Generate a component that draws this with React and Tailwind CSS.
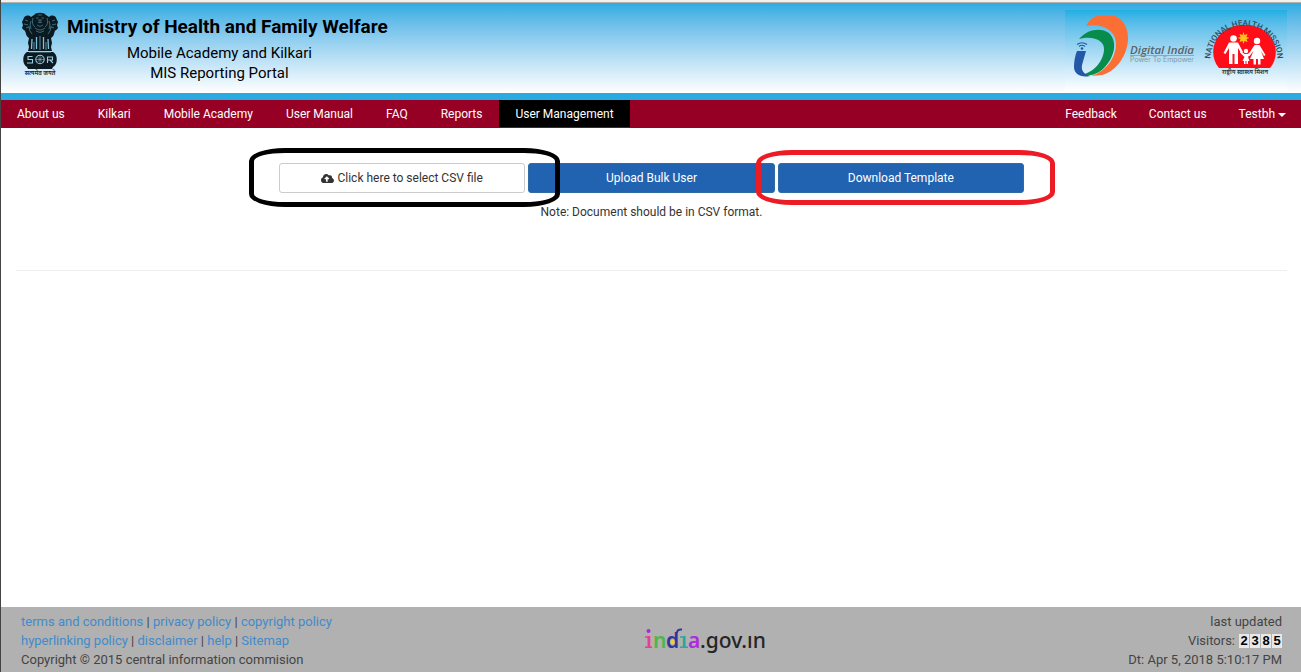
import { FaCloudUploadAlt } from "react-icons/fa";

const MAIN_LINKS = ["About us", "Kilkari", "Mobile Academy", "User Manual", "FAQ", "Reports", "User Management"];
const SIDE_LINKS = ["Feedback", "Contact us"];
const VISITORS = ["2", "3", "8", "5"];

function Emblem() {
  return (
    <svg viewBox="0 0 38 66" className="h-[66px] w-[38px] shrink-0" role="img" aria-label="State Emblem of India">
      <g fill="#0b1a20">
        <path d="M13 3 C15 0 23 0 25 3 L28 5 C31 2 35 4 35.500 7 L37 10 L36 13 L37 16 C36 18 34 18 33.500 20 C33 23 32 25 30 26 L31 31 L30 35 L31 39 H7 L8 35 L7 31 L8 26 C6 25 5 23 4.500 20 C4 18 2 18 1 16 L2 13 L1 10 L2.500 7 C3 4 7 2 10 5 Z" />
        <path d="M6 40 H32 C37 42 37 53 32 55 H6 C1 53 1 42 6 40 Z" />
        <path d="M6 55 H32 L31 57 H7 Z" />
      </g>
      <g stroke="#4d8ba6" strokeWidth="0.7" fill="none">
        <path d="M15 6 h2.500 M20.500 6 h2.500 M17 10 q2 1.500 4 0 M18 7 v2 h2 V7 M4 8 l3 1 M34 8 l-3 1 M3 12 l4 1 M35 12 l-4 1 M5 16 l3-1 M33 16 l-3-1" />
        <path d="M12 6 q-2 6 2 9 M26 6 q2 6 -2 9 M8 14 q0 5 3 8 M30 14 q0 5 -3 8 M16 13 q3 3 6 0 M14 16 q5 4 10 0 M15 19 q4 3 8 0 M10 9 q-2 4 0 8 M28 9 q2 4 0 8 M17 3 h4" />
      </g>
      <g stroke="#7fc0dc" fill="none">
        <path d="M11 27 L10.500 37 M15.500 25 V37 M22.500 25 V37 M27 27 L27.500 37" strokeWidth="1.300" />
        <path d="M19 24 V38 M13 30 V38 M25 30 V38" strokeWidth="0.700" />
        <path d="M8 40 H30" strokeWidth="0.700" />
      </g>
      <g stroke="#9bcde2" strokeWidth="1.100" fill="none">
        <circle cx="19" cy="47.500" r="4.200" />
        <path d="M15 47.500 H23 M19 43.500 V51.500 M16.200 44.700 L21.800 50.300 M21.800 44.700 L16.200 50.300" strokeWidth="0.500" />
        <path d="M11.500 44.500 H7 V47.500 H11.500 V51 H6 M26.500 51 V45 H31.500 V48 H27 M29 48 L32 51" />
      </g>
      <text x="19" y="63" textAnchor="middle" fontSize="6" fontWeight="600" fill="#14262d" className="font-['Noto_Sans',sans-serif]">सत्यमेव जयते</text>
    </svg>
  );
}

function DigitalIndia() {
  return (
    <svg viewBox="0 0 128 66" className="h-[66px] w-32" role="img" aria-label="Digital India, Power To Empower">
      <path d="M13 12 C17 5 22 1 29 1 H38 C49 3 55 12 55 24 C55 42 42 58 29 61 L18 62 C34 57 43 43 43 30 C43 17 30 9 13 12 Z" fill="#fb6f35" />
      <path d="M6 25 C14 15 28 13 36 19 C46 29 40 45 31 54 C25 60 17 63 8 61 C19 59 30 49 31 36 C32 27 21 21 6 25 Z" fill="#078c4c" />
      <path d="M4 37 H13 L9 51 C8 57 11 60 17 62 C8 64 1 60 1 53 C1 47 2 42 4 37 Z" fill="#2258a7" />
      <g fill="none" stroke="#2258a7" strokeWidth="1.200">
        <path d="M4 30.500 Q9 27 14 30.500 M6 32.500 Q9 30 12 32.500" />
      </g>
      <circle cx="9" cy="34.500" r="1.300" fill="#2258a7" />
      <text x="57" y="40" fontSize="11.500" fontWeight="600" fontStyle="italic" fill="#59636a" className="font-['Open_Sans',sans-serif]">Digital India</text>
      <path d="M57 41.500 H121" stroke="#8d979c" strokeWidth="0.800" />
      <text x="57" y="47.500" fontSize="7" fill="#8b98a0" className="font-[Inter,sans-serif]">Power To Empower</text>
    </svg>
  );
}

function HealthMission() {
  return (
    <svg viewBox="0 0 80 66" className="h-[66px] w-20 overflow-visible" role="img" aria-label="National Health Mission">
      <defs>
        <path id="mission-arc" d="M7 55 A33.500 33.500 0 1 1 71 55" />
      </defs>
      <path d="M14 54 C1 39 10 11 39.500 11 C69 11 78 39 65 54 Z" fill="#ff0d18" />
      <text fontSize="8" fontWeight="500" fill="#2f4a56" className="font-[Roboto,sans-serif]">
        <textPath href="#mission-arc" startOffset="50%" textAnchor="middle">NATIONAL HEALTH MISSION</textPath>
      </text>
      <path d="M38.500 18 l1 3 3-1 -1 3 3 1 -3 1 1 3 -3-1 -1 3 -1-3 -3 1 1-3 -3-1 3-1 -1-3 3 1Z" fill="#ffc21a" />
      <g fill="#fff">
        <circle cx="28.500" cy="24.500" r="3.300" />
        <path d="M24 28.500 H33 L38 38 L36.500 39.500 L33 34 V50 H29.500 V40 H27.500 V50 H24 V34 L20.500 40 L18.500 39 Z" />
        <circle cx="52" cy="27" r="3.200" />
        <path d="M49.500 31 H54.500 L60.500 41 L59 42 L56 37 L59 45 H55.500 V50.500 H53 V45 H51 V50.500 H48.500 V45 H45 L48.500 37 L44.500 42 L43 41 Z" />
        <circle cx="41" cy="37" r="2.200" />
        <path d="M35.500 37 L39.500 40 H42.500 L45.500 38 L46.500 39 L43 43 L44.500 47 H43 V50 H41.500 V47 H40.500 V50 H39 V47 H37.500 L39.500 43 L35 38.500 Z" />
      </g>
      <text x="40" y="60" textAnchor="middle" fontSize="6" fontWeight="600" fill="#27363d" className="font-['Noto_Sans',sans-serif]">राष्ट्रीय स्वास्थ्य मिशन</text>
    </svg>
  );
}

function IndiaGov() {
  return (
    <svg viewBox="0 0 124 38" className="h-[38px] w-[124px]" role="img" aria-label="india.gov.in">
      <g fontSize="21" fontWeight="600" className="font-['Noto_Sans',sans-serif]">
        <text x="1" y="27" fill="#e0409a">ı</text>
        <text x="8" y="27" fill="#4db848">n</text>
        <text x="21" y="27" fill="#34349a">d</text>
        <text x="36" y="27" fill="#2aa89b">ı</text>
        <text x="43" y="27" fill="#b02be0">a</text>
      </g>
      <text x="55" y="27" fontSize="21" fontWeight="500" fill="#262626" className="font-['Noto_Sans',sans-serif]">.gov.ın</text>
      <path d="M0 16 H4 M0 26.200 H7" stroke="#e0409a" strokeWidth="1.600" />
      <path d="M35 16 H39 M35 26.200 H43" stroke="#2aa89b" strokeWidth="1.600" />
      <path d="M32 12 Q32 8 37 8.500" fill="none" stroke="#34349a" strokeWidth="2" />
      <circle cx="3.500" cy="10" r="2" fill="#a02be0" />
      <circle cx="27.500" cy="21" r="2.200" fill="#f6d02a" />
    </svg>
  );
}

function NavLink({ label, active }) {
  return (
    <a href="#" className={active ? "bg-black px-4 pt-[6px] pb-[4px]" : "px-4 pt-[6px] pb-[4px] hover:bg-black"}>
      {label}
    </a>
  );
}

function FooterLinks({ items }) {
  return (
    <p>
      {items.map((item, i) => (
        <span key={item}>
          {i > 0 && " | "}
          <a href="#" className="text-[#428bca]">{item}</a>
        </span>
      ))}
    </p>
  );
}

export default function App() {
  return (
    <div className="flex min-h-screen flex-col border-l border-[#444] bg-white font-[Roboto,sans-serif] text-[12px] leading-[17px] text-[#333]">
      <div className="h-[3px] border-b border-[#b5b1ad] bg-[#f2f1f0]" />
      <header className="flex h-[97px] items-start justify-between border-b-7 border-[#29abe2] bg-linear-to-b from-[#29abe2] to-white pr-[14px]">
        <div className="flex pt-[9px] pl-5 text-black">
          <Emblem />
          <div className="ml-2 text-center">
            <h1 className="mb-px text-[19px] leading-[30px] font-bold">Ministry of Health and Family Welfare</h1>
            <p className="pr-4 text-[15px] leading-[20px]">Mobile Academy and Kilkari</p>
            <p className="pr-4 text-[15px] leading-[20px]">MIS Reporting Portal</p>
          </div>
        </div>
        <div className="mt-[7px] flex h-[81px] gap-1 bg-linear-to-b from-[#1cafe4] to-white pt-1 pr-[2px] pl-2">
          <DigitalIndia />
          <HealthMission />
        </div>
      </header>

      <nav className="flex justify-between bg-[#960024] pb-px text-white">
        <div className="flex gap-px">
          {MAIN_LINKS.map((label) => (
            <NavLink key={label} label={label} active={label === "User Management"} />
          ))}
        </div>
        <div className="flex">
          {SIDE_LINKS.map((label) => (
            <NavLink key={label} label={label} />
          ))}
          <button type="button" className="flex items-center gap-[3px] pt-[2px] pr-[15px] pl-4">
            Testbh
            <span className="border-x-4 border-t-4 border-x-transparent border-t-white" />
          </button>
        </div>
      </nav>

      <main className="grow pt-[35px] pr-[14px] pl-[15px]">
        <div className="mx-auto grid w-[745px] max-w-full grid-cols-3 gap-[3px]">
          <div className="relative">
            <button type="button" className="flex h-[30px] w-full items-center justify-center gap-[3px] rounded-[3px] border border-[#ccc] bg-white">
              <FaCloudUploadAlt className="size-[13px]" />
              Click here to select CSV file
            </button>
            <span className="pointer-events-none absolute -top-[15px] -right-[35px] -bottom-[14px] -left-[30px] z-10 rounded-[36px/13px] border-5 border-black" />
          </div>
          <button type="button" className="h-[30px] rounded-[3px] border border-[#2e6da4] bg-[#2163b1] text-white">Upload Bulk User</button>
          <div className="relative">
            <button type="button" className="h-[30px] w-full rounded-[3px] border border-[#2e6da4] bg-[#2163b1] text-white">Download Template</button>
            <span className="pointer-events-none absolute -top-[13px] -right-[31px] -bottom-[12px] -left-[22px] z-10 rounded-[36px/13px] border-5 border-[#ed1c24]" />
          </div>
        </div>
        <p className="mt-[11px] text-center">Note: Document should be in CSV format.</p>
        <hr className="mt-[49px] border-[#eee]" />
      </main>

      <footer className="flex h-[65px] bg-[#b1b1b1] pt-[5px] pr-[19px] pl-5 text-[13px] leading-[19px] text-[#444]">
        <div className="w-[49.5%]">
          <FooterLinks items={["terms and conditions", "privacy policy", "copyright policy"]} />
          <FooterLinks items={["hyperlinking policy", "disclaimer", "help", "Sitemap"]} />
          <p>Copyright © 2015 central information commision</p>
        </div>
        <a href="#" className="pt-[9px]">
          <IndiaGov />
        </a>
        <div className="grow text-right">
          <p>last updated</p>
          <p className="flex items-center justify-end gap-1">
            Visitors:
            <span className="flex gap-px font-['Liberation_Sans',sans-serif] text-[13px] leading-[14px] font-bold text-black">
              {VISITORS.map((digit, i) => (
                <span key={i} className="w-[10px] bg-[#e8e8e8] text-center">{digit}</span>
              ))}
            </span>
          </p>
          <p>Dt: Apr 5, 2018 5:10:17 PM</p>
        </div>
      </footer>
    </div>
  );
}
